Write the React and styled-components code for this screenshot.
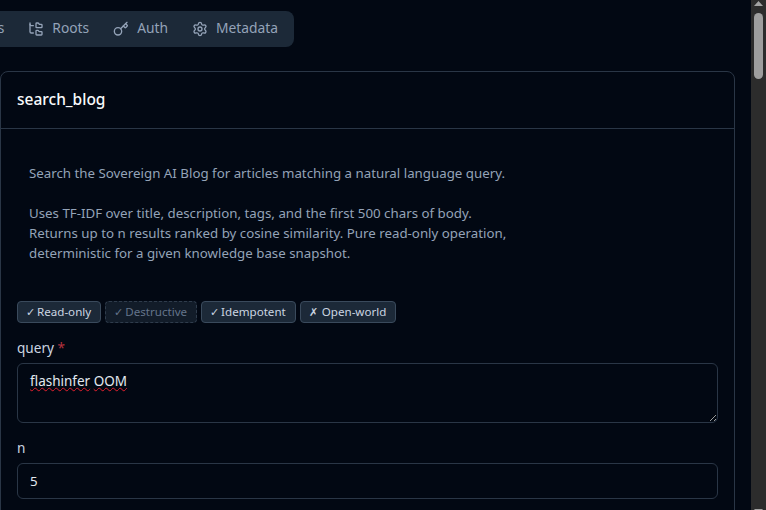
import React from "react";
import styled, { createGlobalStyle, css } from "styled-components";
import { FolderTree, Key, Settings } from "lucide-react";

const GlobalStyle = createGlobalStyle`
  html, body {
    margin: 0;
    height: 100%;
    overflow: hidden;
    background: #020813;
  }
`;

const Window = styled.div`
  display: flex;
  align-items: flex-start;
  width: 766px;
  height: 510px;
  overflow: hidden;
  font-family: "Noto Sans", "Open Sans", sans-serif;
  font-size: 13.3px;
  color: #e2e8f0;
`;

const Main = styled.main`
  flex: 1;
  min-width: 0;
  padding-top: 11px;
`;

const TabBar = styled.nav`
  display: flex;
  justify-content: flex-end;
  width: 294px;
  height: 36px;
  padding-right: 4px;
  box-sizing: border-box;
  overflow: hidden;
  border-radius: 0 8px 8px 0;
  background: #1c2938;
`;

const Tab = styled.div`
  display: flex;
  flex-shrink: 0;
  align-items: center;
  gap: 8px;
  padding: 0 12px;
  color: #94a3b8;
  font-size: 13.8px;
  svg {
    width: 16px;
    height: 16px;
  }
`;

const TabText = styled.span`
  margin-top: -4px;
`;

const Card = styled.section`
  width: 735px;
  margin-top: 24px;
  box-sizing: border-box;
  border: 1px solid #2a3646;
  border-radius: 8px;
`;

const CardHeader = styled.header`
  height: 57px;
  display: flex;
  align-items: center;
  padding: 0 0 3px 16px;
  box-sizing: border-box;
  border-bottom: 1px solid #2a3646;
  color: #f8fafc;
  font-size: 15.5px;
  font-weight: 500;
`;

const CardBody = styled.div`
  padding: 34px 16px 60px;
`;

const Description = styled.p`
  margin: 0 0 38px;
  padding-left: 12px;
  color: #94a3b8;
  line-height: 20px;
  white-space: pre-line;
`;

const Badges = styled.div`
  display: flex;
  gap: 4px;
  margin-bottom: 15px;
`;

const Badge = styled.span`
  display: inline-flex;
  align-items: center;
  height: 22px;
  padding: 0 9px 1px 8px;
  box-sizing: border-box;
  border: 1px solid #3a4a5c;
  border-radius: 4px;
  background: #1c2938;
  color: #cbd5e1;
  font-size: 11.6px;
  ${(p) =>
    p.$off &&
    css`
      border: 1px dashed #2f3c4c;
      background: #121c29;
      color: #64748b;
    `}
`;

const Mark = styled.span`
  width: ${(p) => (p.$wide ? "13px" : "11px")};
  flex-shrink: 0;
  font-size: 10.5px;
`;

const Label = styled.div`
  margin-bottom: 5px;
  height: 20px;
  line-height: 20px;
  color: #cbd5e1;
  font-size: 13.6px;
`;

const Required = styled.span`
  color: #b3323f;
`;

const TextArea = styled.div`
  width: 701px;
  height: 60px;
  margin-bottom: 15px;
  padding: 7px 12px;
  box-sizing: border-box;
  border: 1px solid #2a3646;
  border-radius: 6px;
  font-size: 13.5px;
  line-height: 20px;
  overflow: auto;
  resize: vertical;
`;

const Misspelt = styled.span`
  text-decoration: underline wavy #e0202e 1px;
  text-underline-offset: 1px;
`;

const Input = styled.div`
  width: 701px;
  height: 36px;
  display: flex;
  align-items: center;
  padding: 0 12px;
  box-sizing: border-box;
  border: 1px solid #2a3646;
  border-radius: 6px;
`;

const ScrollBar = styled.aside`
  width: 15px;
  height: 520px;
  flex-shrink: 0;
  display: flex;
  flex-direction: column;
  align-items: center;
  background: #2c2c2c;
`;

const Arrow = styled.svg`
  width: 15px;
  height: 13px;
  flex-shrink: 0;
  fill: #a3a3a3;
`;

const Thumb = styled.div`
  width: 9px;
  height: 66px;
  border-radius: 5px;
  background: #9e9e9e;
`;

const Spacer = styled.div`
  flex: 1;
`;

const description = `Search the Sovereign AI Blog for articles matching a natural language query.

Uses TF-IDF over title, description, tags, and the first 500 chars of body.
Returns up to n results ranked by cosine similarity. Pure read-only operation,
deterministic for a given knowledge base snapshot.`;

export default function App() {
  return (
    <Window>
      <GlobalStyle />
      <Main>
        <TabBar>
          <Tab>
            <TabText>Prompts</TabText>
          </Tab>
          <Tab>
            <FolderTree />
            <TabText>Roots</TabText>
          </Tab>
          <Tab>
            <Key />
            <TabText>Auth</TabText>
          </Tab>
          <Tab>
            <Settings />
            <TabText>Metadata</TabText>
          </Tab>
        </TabBar>
        <Card>
          <CardHeader>search_blog</CardHeader>
          <CardBody>
            <Description>{description}</Description>
            <Badges>
              <Badge>
                <Mark>✓</Mark>Read-only
              </Badge>
              <Badge $off>
                <Mark>✓</Mark>Destructive
              </Badge>
              <Badge>
                <Mark>✓</Mark>Idempotent
              </Badge>
              <Badge>
                <Mark $wide>✗</Mark>Open-world
              </Badge>
            </Badges>
            <Label>
              query <Required>*</Required>
            </Label>
            <TextArea>
              <Misspelt>flashinfer</Misspelt> <Misspelt>OOM</Misspelt>
            </TextArea>
            <Label>n</Label>
            <Input>5</Input>
          </CardBody>
        </Card>
      </Main>
      <ScrollBar>
        <Arrow viewBox="0 0 15 13">
          <path d="M7.5 1 L12 6 L3 6 Z" />
        </Arrow>
        <Thumb />
        <Spacer />
        <Arrow viewBox="0 0 15 13">
          <path d="M3 2 L12 2 L7.5 7 Z" />
        </Arrow>
      </ScrollBar>
    </Window>
  );
}
